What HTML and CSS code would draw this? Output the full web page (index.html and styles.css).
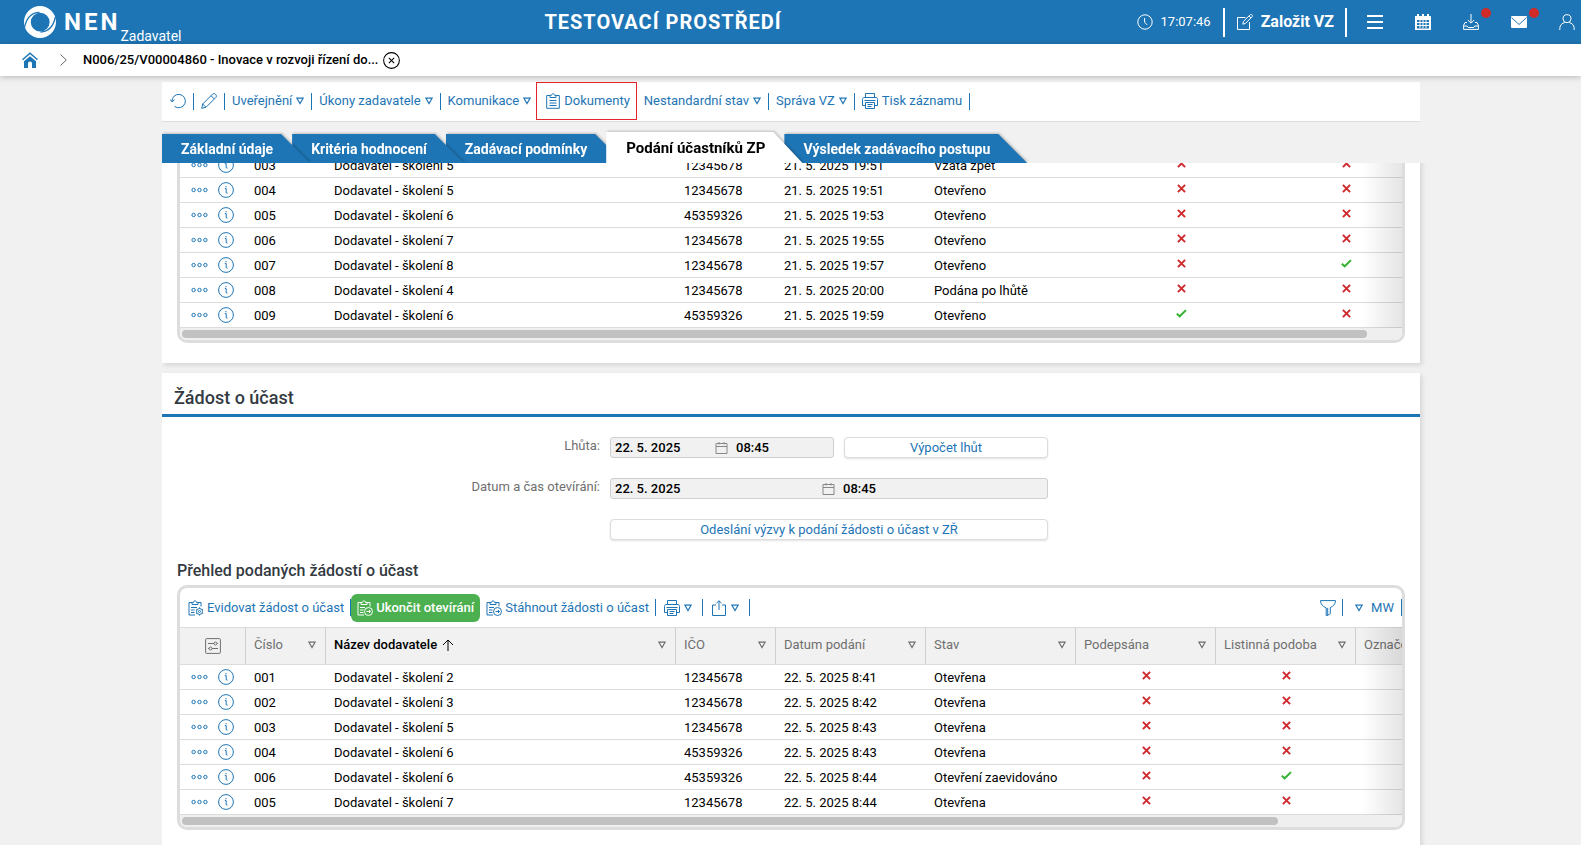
FILE: index.html
```html
<!DOCTYPE html>
<html lang="cs">
<head>
<meta charset="utf-8">
<title>NEN – Zadavatel</title>
<link rel="stylesheet" href="styles.css">
</head>
<body>
<svg class="sprite" aria-hidden="true">
  <symbol id="i-clock" viewBox="0 0 16 16"><circle cx="8" cy="8" r="7.2"/><path d="M7.6 4v4.3l2.6 2.6"/></symbol>
  <symbol id="i-edit" viewBox="0 0 16 16"><path d="M8.5 3.5h-8v12h12V8M5.8 10.2l.7-2.8 6.6-6.6c.6-.5 1.4-.4 1.9.1s.6 1.3 0 1.9L8.5 9.4zM12 2l2 2"/></symbol>
  <symbol id="i-refresh" viewBox="0 0 16 16"><path d="M2 8.600A6.700 6.700 0 1 1 4.500 13.300M0 6.300l2 2.500 2.600-2"/></symbol>
  <symbol id="i-pencil" viewBox="0 0 16 16"><path d="M.7 15.300l1-4.300L11.600 1.100c.8-.8 2-.6 2.700.1l.5.500c.7.700.8 1.900.1 2.700L5 14.300zM10 2.700l3.300 3.300M1.700 11l3.300 3.300"/></symbol>
  <symbol id="i-down" viewBox="0 0 8 8"><path d="M.9 1.200h6.200L4 6.600z"/></symbol>
  <symbol id="i-clip" viewBox="0 0 14 16"><path d="M4 2.500H.7v12.800h12.600V2.500H10M4 4.500V2.300h1.500C5.500.3 8.500.3 8.500 2.300H10v2.200zM3.500 7.500h7M3.500 10h7M3.500 12.500h7"/></symbol>
  <symbol id="i-print" viewBox="0 0 16 16"><path d="M3.500 4.500v-4h9v4M3.500 12.500h-3v-6c0-1 .5-2 1.500-2h12c1 0 1.500 1 1.500 2v6h-3M3.500 9.500h9v6h-9zM5.500 11.500h5M5.500 13.500h4M2.500 7.500h11"/></symbol>
  <symbol id="i-clipgear" viewBox="0 0 16 16"><path d="M4 2.500H1v12.500h6M10 2.500h3v4M4 4.500V2.400h1.500c0-2 3-2 3 0H10v2.100zM3 7.500h6M3 10h3.500M3 12.500h3.500"/><circle cx="11.500" cy="11.500" r="3"/><circle cx="11.500" cy="11.500" r="1"/><path d="M11.500 7.400v1.100M11.500 14.500v1.100M7.900 9.400l1 .6M14.100 13l1 .6M7.900 13.600l1-.6M14.100 10l1-.6"/></symbol>
  <symbol id="i-cliparrow" viewBox="0 0 16 16"><path d="M4 2.500H1v12.500h6M10 2.500h3v4M4 4.500V2.400h1.500c0-2 3-2 3 0H10v2.100zM3 7.500h5M3 10h3.500M3 12.500h3.500M9.500 11.500h4M11.900 9.900l1.600 1.600-1.600 1.600"/><circle cx="11.500" cy="11.500" r="4"/></symbol>
  <symbol id="i-share" viewBox="0 0 16 16"><path d="M5 5H1.500v10.500h13V5H11M8 10V.8M5.500 3.200L8 .8l2.500 2.400"/></symbol>
  <symbol id="i-funnel" viewBox="0 0 16 16"><path d="M.5.600h15c0 3.400-2 5.400-5.200 7v6l-2.600 1.800V7.800M.5.600c0 3.400 2 5.600 5.700 7.400v7.500h1.500"/></symbol>
  <symbol id="i-settings" viewBox="0 0 16 16"><rect x=".6" y=".6" width="14.800" height="14.800" rx="1"/><path d="M3 5.500h6M12 5.500h1M3 10.500h1M7 10.500h6"/><circle cx="10.500" cy="5.500" r="1.500"/><circle cx="5.500" cy="10.500" r="1.500"/></symbol>
  <symbol id="i-up" viewBox="0 0 12 12"><path d="M6 12V1M1 6l5-5 5 5"/></symbol>
  <symbol id="i-dots" viewBox="0 0 17 6"><circle cx="2.600" cy="3" r="1.700"/><circle cx="8.500" cy="3" r="1.700"/><circle cx="14.400" cy="3" r="1.700"/></symbol>
  <symbol id="i-info" viewBox="0 0 16 16"><circle cx="8" cy="8" r="7.400"/><path d="M6.800 6.600h1.400v4.200l1.300.3M8 4v1.300"/></symbol>
  <symbol id="i-cal" viewBox="0 0 12 12"><path d="M.5 1.500h11v10H.5zM.5 4.500h11M3.500 0v2.500M8.500 0v2.500"/></symbol>
  <symbol id="i-x" viewBox="0 0 9 9"><path d="M.9.900l7.200 7.200M8.100.9L.9 8.100"/></symbol>
  <symbol id="i-check" viewBox="0 0 11 9"><path d="M.8 4.800l2.900 2.500L10 1.100"/></symbol>
</svg>

<header class="topbar">
  <a class="brand" href="#">
    <svg class="logo" viewBox="0 0 32 32"><path fill="#fff" fill-rule="evenodd" d="M16 0a16 16 0 1 1 0 32 16 16 0 0 1 0-32zm.2 6.800a9.400 9.400 0 1 0 0 18.800 9.400 9.400 0 0 0 0-18.800z"/><path fill="none" stroke="#1e75b5" stroke-width="1.300" d="M.6 21C2.500 12 7.500 6.600 15.500 6.300M31.400 11C29.500 20 24.500 25.800 16.500 26.100"/></svg>
    <span class="brand-name">NEN</span><span class="brand-role">Zadavatel</span>
  </a>
  <h1 class="env">TESTOVACÍ PROSTŘEDÍ</h1>
  <div class="tools">
    <span class="clock"><svg class="ic16"><use href="#i-clock"/></svg>17:07:46</span>
    <button class="create"><svg class="ic16"><use href="#i-edit"/></svg>Založit VZ</button>
    <nav class="quick">
      <button aria-label="Menu"><svg class="ic16" viewBox="0 0 16 16"><path stroke-width="2" d="M0 2h16M0 8h16M0 14h16"/></svg></button>
      <button aria-label="Kalendář"><svg class="ic16" viewBox="0 0 16 16"><path fill="#fff" stroke="none" fill-rule="evenodd" d="M0 2h2V0h2v2h3V0h2v2h3V0h2v2h2v14H0zM2 6v8.500h12V6z"/><path d="M2 8.500h12M2 11.500h12M5 6v8M8 6v8M11 6v8"/></svg></button>
      <button class="dot" aria-label="Stažené soubory"><svg class="ic16" viewBox="0 0 16 16"><path d="M8 0v9M4.800 6L8 9.200 11.200 6M4 8.500H2L.6 11.200v4.200h14.800v-4.200L14 8.500h-2M.6 12h3.600l1 1.500h5.600l1-1.500h3.600"/></svg></button>
      <button class="dot" aria-label="Zprávy"><svg class="ic16" viewBox="0 0 16 16"><rect x="0" y="2" width="16" height="12" rx="1" fill="#fff" stroke="none"/><path stroke="#1e75b5" d="M.5 3.500L8 10.500l7.500-7"/></svg></button>
      <button aria-label="Uživatel"><svg class="ic16" viewBox="0 0 16 16"><circle cx="8" cy="4.700" r="4"/><path d="M.8 16v-1.500c0-3.500 2.500-5.500 5-6M15.200 16v-1.500c0-3.500-2.500-5.500-5-6"/></svg></button>
    </nav>
  </div>
</header>

<nav class="crumbs">
  <a href="#" aria-label="Domů"><svg class="home" viewBox="0 0 16 16"><path fill="#1e75b5" d="M8 4.300l6 5V16h-4v-4.500a2 2 0 0 0-4 0V16H2V9.300z"/><path fill="none" stroke="#1e75b5" stroke-width="1.500" d="M.5 7.800L8 1.200l7.500 6.600"/></svg></a>
  <svg class="chev" viewBox="0 0 7 12"><path d="M.5.500L6.300 6 .5 11.500"/></svg>
  <a class="crumb" href="#">N006/25/V00004860 - Inovace v rozvoji řízení do...</a>
  <button class="close" aria-label="Zavřít"><svg viewBox="0 0 16 16"><circle cx="8" cy="8" r="7.400"/><path d="M5.500 5.500l5 5M10.500 5.500l-5 5"/></svg></button>
</nav>

<main class="page">
  <div class="actions">
    <button aria-label="Obnovit"><svg class="ic16"><use href="#i-refresh"/></svg></button>
    <button aria-label="Upravit"><svg class="ic16"><use href="#i-pencil"/></svg></button>
    <button>Uveřejnění<svg class="tri"><use href="#i-down"/></svg></button>
    <button>Úkony zadavatele<svg class="tri"><use href="#i-down"/></svg></button>
    <button class="open">Komunikace<svg class="tri"><use href="#i-down"/></svg></button>
    <button class="marked"><svg class="ic14"><use href="#i-clip"/></svg>Dokumenty</button>
    <button>Nestandardní stav<svg class="tri"><use href="#i-down"/></svg></button>
    <button>Správa VZ<svg class="tri"><use href="#i-down"/></svg></button>
    <button><svg class="ic16"><use href="#i-print"/></svg>Tisk záznamu</button>
  </div>

  <div class="tabs" role="tablist">
    <div class="tab t1"><button role="tab">Základní údaje</button></div>
    <div class="tab t2"><button role="tab">Kritéria hodnocení</button></div>
    <div class="tab t3"><button role="tab">Zadávací podmínky</button></div>
    <div class="tab active"><button role="tab" aria-selected="true">Podání účastníků ZP</button></div>
    <div class="tab t5"><button role="tab">Výsledek zadávacího postupu</button></div>
  </div>

  <div class="content">
    <section class="panel scrolled">
      <div class="frame">
        <div class="grid">
          <table class="rows">
            <colgroup><col class="w66"><col class="w80"><col class="w350"><col class="w100"><col class="w150"><col class="w173"><col class="w165"><col class="w165"></colgroup>
            <tbody>
              <tr><td class="act"><svg class="dots"><use href="#i-dots"/></svg><svg class="info"><use href="#i-info"/></svg></td><td>003</td><td>Dodavatel - školení 5</td><td>12345678</td><td>21. 5. 2025 19:51</td><td>Vzata zpět</td><td class="flag"><svg class="no"><use href="#i-x"/></svg></td><td class="flag"><svg class="no"><use href="#i-x"/></svg></td></tr>
              <tr><td class="act"><svg class="dots"><use href="#i-dots"/></svg><svg class="info"><use href="#i-info"/></svg></td><td>004</td><td>Dodavatel - školení 5</td><td>12345678</td><td>21. 5. 2025 19:51</td><td>Otevřeno</td><td class="flag"><svg class="no"><use href="#i-x"/></svg></td><td class="flag"><svg class="no"><use href="#i-x"/></svg></td></tr>
              <tr><td class="act"><svg class="dots"><use href="#i-dots"/></svg><svg class="info"><use href="#i-info"/></svg></td><td>005</td><td>Dodavatel - školení 6</td><td>45359326</td><td>21. 5. 2025 19:53</td><td>Otevřeno</td><td class="flag"><svg class="no"><use href="#i-x"/></svg></td><td class="flag"><svg class="no"><use href="#i-x"/></svg></td></tr>
              <tr><td class="act"><svg class="dots"><use href="#i-dots"/></svg><svg class="info"><use href="#i-info"/></svg></td><td>006</td><td>Dodavatel - školení 7</td><td>12345678</td><td>21. 5. 2025 19:55</td><td>Otevřeno</td><td class="flag"><svg class="no"><use href="#i-x"/></svg></td><td class="flag"><svg class="no"><use href="#i-x"/></svg></td></tr>
              <tr><td class="act"><svg class="dots"><use href="#i-dots"/></svg><svg class="info"><use href="#i-info"/></svg></td><td>007</td><td>Dodavatel - školení 8</td><td>12345678</td><td>21. 5. 2025 19:57</td><td>Otevřeno</td><td class="flag"><svg class="no"><use href="#i-x"/></svg></td><td class="flag"><svg class="yes"><use href="#i-check"/></svg></td></tr>
              <tr><td class="act"><svg class="dots"><use href="#i-dots"/></svg><svg class="info"><use href="#i-info"/></svg></td><td>008</td><td>Dodavatel - školení 4</td><td>12345678</td><td>21. 5. 2025 20:00</td><td>Podána po lhůtě</td><td class="flag"><svg class="no"><use href="#i-x"/></svg></td><td class="flag"><svg class="no"><use href="#i-x"/></svg></td></tr>
              <tr><td class="act"><svg class="dots"><use href="#i-dots"/></svg><svg class="info"><use href="#i-info"/></svg></td><td>009</td><td>Dodavatel - školení 6</td><td>45359326</td><td>21. 5. 2025 19:59</td><td>Otevřeno</td><td class="flag"><svg class="yes"><use href="#i-check"/></svg></td><td class="flag"><svg class="no"><use href="#i-x"/></svg></td></tr>
            </tbody>
          </table>
        </div>
        <div class="hbar"><div class="thumb" style="width:97.3%"></div></div>
      </div>
    </section>

    <section class="panel">
      <h2>Žádost o účast</h2>
      <form class="form">
        <label for="d1">Lhůta:</label>
        <div class="field"><input id="d1" value="22. 5. 2025" readonly><svg class="cal"><use href="#i-cal"/></svg><input class="time" value="08:45" aria-label="Lhůta – čas" readonly></div>
        <button type="button" class="btn">Výpočet lhůt</button>
        <label for="d2">Datum a čas otevírání:</label>
        <div class="field wide"><input id="d2" value="22. 5. 2025" readonly><svg class="cal"><use href="#i-cal"/></svg><input class="time" value="08:45" aria-label="Otevírání – čas" readonly></div>
        <button type="button" class="btn wide">Odeslání výzvy k podání žádosti o účast v ZŘ</button>
      </form>
      <h3>Přehled podaných žádostí o účast</h3>
      <div class="frame">
        <div class="bar">
          <button><svg class="ic16"><use href="#i-clipgear"/></svg>Evidovat žádost o účast</button>
          <button class="green"><svg class="ic16"><use href="#i-cliparrow"/></svg>Ukončit otevírání</button>
          <button><svg class="ic16"><use href="#i-cliparrow"/></svg>Stáhnout žádosti o účast</button>
          <button class="menu" aria-label="Tisk"><svg class="ic16"><use href="#i-print"/></svg><svg class="tri"><use href="#i-down"/></svg></button>
          <button class="menu" aria-label="Export"><svg class="ic16"><use href="#i-share"/></svg><svg class="tri"><use href="#i-down"/></svg></button>
          <span class="space"></span>
          <button aria-label="Filtr"><svg class="ic16"><use href="#i-funnel"/></svg></button>
          <button class="view"><svg class="tri"><use href="#i-down"/></svg>MW</button>
        </div>
        <div class="grid">
          <table class="rows">
            <colgroup><col class="w66"><col class="w80"><col class="w350"><col class="w100"><col class="w150"><col class="w150"><col class="w140"><col class="w140"><col class="w140"></colgroup>
            <thead>
              <tr><th class="set"><svg class="ic16"><use href="#i-settings"/></svg></th>
                <th><div>Číslo<svg class="tri"><use href="#i-down"/></svg></div></th>
                <th><div><b>Název dodavatele</b><svg class="up"><use href="#i-up"/></svg><svg class="tri"><use href="#i-down"/></svg></div></th>
                <th><div>IČO<svg class="tri"><use href="#i-down"/></svg></div></th>
                <th><div>Datum podání<svg class="tri"><use href="#i-down"/></svg></div></th>
                <th><div>Stav<svg class="tri"><use href="#i-down"/></svg></div></th>
                <th><div>Podepsána<svg class="tri"><use href="#i-down"/></svg></div></th>
                <th><div>Listinná podoba<svg class="tri"><use href="#i-down"/></svg></div></th>
                <th><div>Označení<svg class="tri"><use href="#i-down"/></svg></div></th></tr>
            </thead>
            <tbody>
              <tr><td class="act"><svg class="dots"><use href="#i-dots"/></svg><svg class="info"><use href="#i-info"/></svg></td><td>001</td><td>Dodavatel - školení 2</td><td>12345678</td><td>22. 5. 2025 8:41</td><td>Otevřena</td><td class="flag"><svg class="no"><use href="#i-x"/></svg></td><td class="flag"><svg class="no"><use href="#i-x"/></svg></td><td></td></tr>
              <tr><td class="act"><svg class="dots"><use href="#i-dots"/></svg><svg class="info"><use href="#i-info"/></svg></td><td>002</td><td>Dodavatel - školení 3</td><td>12345678</td><td>22. 5. 2025 8:42</td><td>Otevřena</td><td class="flag"><svg class="no"><use href="#i-x"/></svg></td><td class="flag"><svg class="no"><use href="#i-x"/></svg></td><td></td></tr>
              <tr><td class="act"><svg class="dots"><use href="#i-dots"/></svg><svg class="info"><use href="#i-info"/></svg></td><td>003</td><td>Dodavatel - školení 5</td><td>12345678</td><td>22. 5. 2025 8:43</td><td>Otevřena</td><td class="flag"><svg class="no"><use href="#i-x"/></svg></td><td class="flag"><svg class="no"><use href="#i-x"/></svg></td><td></td></tr>
              <tr><td class="act"><svg class="dots"><use href="#i-dots"/></svg><svg class="info"><use href="#i-info"/></svg></td><td>004</td><td>Dodavatel - školení 6</td><td>45359326</td><td>22. 5. 2025 8:43</td><td>Otevřena</td><td class="flag"><svg class="no"><use href="#i-x"/></svg></td><td class="flag"><svg class="no"><use href="#i-x"/></svg></td><td></td></tr>
              <tr><td class="act"><svg class="dots"><use href="#i-dots"/></svg><svg class="info"><use href="#i-info"/></svg></td><td>006</td><td>Dodavatel - školení 6</td><td>45359326</td><td>22. 5. 2025 8:44</td><td>Otevření zaevidováno</td><td class="flag"><svg class="no"><use href="#i-x"/></svg></td><td class="flag"><svg class="yes"><use href="#i-check"/></svg></td><td></td></tr>
              <tr><td class="act"><svg class="dots"><use href="#i-dots"/></svg><svg class="info"><use href="#i-info"/></svg></td><td>005</td><td>Dodavatel - školení 7</td><td>12345678</td><td>22. 5. 2025 8:44</td><td>Otevřena</td><td class="flag"><svg class="no"><use href="#i-x"/></svg></td><td class="flag"><svg class="no"><use href="#i-x"/></svg></td><td></td></tr>
            </tbody>
          </table>
        </div>
        <div class="hbar"><div class="thumb" style="width:90%"></div></div>
      </div>
    </section>
  </div>
</main>
</body>
</html>
```

FILE: styles.css
```css
* { box-sizing: border-box; }
html, body { height: 100%; margin: 0; }
body {
  display: flex;
  flex-direction: column;
  overflow: hidden;
  background: #f1f1f1;
  color: #000;
  font: 13px/16px Roboto, sans-serif;
}
button { display: flex; align-items: center; margin: 0; padding: 0; border: 0; background: none; color: inherit; font: inherit; white-space: nowrap; cursor: pointer; }
a { color: inherit; text-decoration: none; }
svg { flex: none; fill: none; stroke: currentColor; stroke-width: 1; }
.sprite { position: absolute; width: 0; height: 0; }
.ic16 { width: 16px; height: 16px; }
.ic14 { width: 14px; height: 16px; }
.tri { width: 8px; height: 8px; stroke-width: 1.2; }

/* top bar */
.topbar { display: flex; align-items: center; justify-content: space-between; flex: none; height: 44px; background: #1e75b5; color: #fff; }
.brand { display: flex; align-items: center; height: 44px; padding-left: 24px; }
.logo { width: 32px; height: 32px; stroke: none; }
.brand-name { margin-left: 8px; font-size: 24px; line-height: 28px; font-weight: bold; letter-spacing: 3px; }
.brand-role { align-self: flex-end; font-size: 14px; }
.env { margin: 0; padding-left: 8px; font-size: 20px; line-height: 24px; font-weight: bold; letter-spacing: 1px; }
.tools { display: flex; align-items: center; justify-content: flex-end; padding-right: 6px; }
.clock { display: flex; align-items: center; gap: 8px; padding-right: 12px; }
.create { gap: 8px; height: 29px; padding: 0 11px 0 12px; border: solid #fff; border-width: 0 2px; font-size: 16px; font-weight: bold; }
.quick { display: flex; gap: 32px; padding-left: 20px; }
.dot { position: relative; }
.dot::after { content: ""; position: absolute; top: -6px; left: 18px; width: 10px; height: 10px; border-radius: 50%; background: #d02a2a; }

.crumbs { position: relative; display: flex; align-items: center; flex: none; height: 32px; padding-left: 22px; background: #fff; box-shadow: 0 1px 6px rgba(0, 0, 0, .25); }
.home { display: block; width: 16px; height: 16px; stroke: none; }
.chev { width: 7px; height: 12px; margin: 0 16px 0 22px; stroke: #666; }
.crumb { font-weight: 500; }
.close { margin-left: 5px; }
.close svg { width: 17px; height: 17px; }

/* page column */
.page { display: flex; flex-direction: column; flex: 1; min-height: 0; padding: 6px 161px 0 162px; }
.actions { display: flex; align-items: center; flex: none; height: 40px; padding: 0 0 1px 1px; border-bottom: 1px solid #ddd; background: #fff; color: #1e75b5; }
.actions button { gap: 4px; height: 17px; padding: 0 7px; border-right: 1px solid #1e75b5; }
.actions .open { padding-right: 5px; border-right: 0; }
.actions .marked { height: 38px; padding: 0 6px 0 9px; border: 1px solid #e5252c; }

.tabs { display: flex; align-items: flex-end; flex: none; height: 41px; }
.tab { position: relative; margin-left: -18px; filter: drop-shadow(1px -1px 1px rgba(0, 0, 0, .2)); }
.tab button { height: 29px; padding: 1px 37px 0 19px; background: #1e75b5; color: #fff; font-size: 14px; font-weight: bold; clip-path: polygon(0 0, calc(100% - 29px) 0, 100% 100%, 0 100%); }
.t1 { z-index: 4; margin-left: 0; }
.t2 { z-index: 3; }
.t3 { z-index: 2; }
.active { z-index: 5; }
.t5 { z-index: 1; }
.tab.active button { height: 31px; padding: 0 37px 0 20px; background: #fff; color: #000; font-size: 15px; font-weight: bold; }

.content { display: flex; flex-direction: column; gap: 10px; flex: 1; min-height: 0; margin-right: -8px; padding-right: 8px; overflow: hidden; position: relative; z-index: 6; }
.panel { flex: none; padding-bottom: 20px; background: #fff; box-shadow: 2px 2px 5px rgba(0, 0, 0, .12); }
.scrolled { margin-top: -13px; }
h2 { margin: 0; padding: 15px 12px 6px; border-bottom: 3px solid #1e75b5; color: #333a42; font-size: 18px; line-height: 20px; font-weight: 500; }
h3 { margin: 0; padding: 21px 15px 4px; color: #333a42; font-size: 16px; line-height: 20px; font-weight: 500; }

/* form */
.form { display: grid; grid-template-columns: 438fr 224px 204px 362fr; column-gap: 10px; row-gap: 20px; padding-top: 20px; }
.form label { grid-column: 1; color: #6f6f6f; text-align: right; line-height: 18px; }
.field { display: flex; align-items: center; grid-column: 2; height: 21px; padding: 0 4px; border: 1px solid #cfcfcf; border-radius: 3px; background: #f1f1f1; }
.field.wide, .btn.wide { grid-column: 2 / span 2; }
.field input { flex: 1 1 0; width: 0; height: 17px; padding: 0; border: 0; background: none; font: 500 13px/17px Roboto, sans-serif; }
.field .time { margin-left: 8px; }
.cal { width: 13px; height: 12px; margin-left: 7px; stroke: #888; }
.btn { justify-content: center; height: 21px; border: 1px solid #dcdcdc; border-radius: 4px; background: #fff; box-shadow: 0 1px 2px rgba(0, 0, 0, .12); color: #1e75b5; }

/* data grids */
.frame { margin: 0 15px; border: 3px solid #dcdddf; border-radius: 10px; overflow: hidden; }
.bar { display: flex; align-items: center; height: 39px; padding-left: 2px; color: #1e75b5; }
.bar button { gap: 3px; height: 17px; padding: 0 6px; border-right: 1px solid #1e75b5; }
.bar .green { height: 28px; padding: 0 6px; border: 0; border-radius: 6px; background: #4caf50; color: #fff; font-weight: 500; }
.bar .menu { gap: 4px; padding: 0 10px 0 8px; }
.bar .view { gap: 8px; padding: 0 7px 0 12px; }
.space { flex: 1; }
.grid { position: relative; overflow: hidden; }
.grid::after { content: ""; position: absolute; inset: 0 0 0 auto; width: 40px; background: linear-gradient(to right, transparent, rgba(0, 0, 0, .1)); }
.rows { width: 0; border-collapse: separate; border-spacing: 0; table-layout: fixed; }
.w66 { width: 66px; } .w80 { width: 80px; } .w100 { width: 100px; } .w140 { width: 140px; } .w150 { width: 150px; }
.w165 { width: 165px; } .w173 { width: 173px; } .w350 { width: 350px; }
th, td { padding: 2px 0 0 8px; border-bottom: 1px solid #dcdcdc; text-align: left; font-weight: normal; white-space: nowrap; }
td { height: 25px; }
th { height: 38px; padding: 0 9px 3px 8px; border-top: 1px solid #dcdcdc; border-right: 1px solid #d0d0d0; background: #f1f1f1; color: #6f6f6f; }
th div { display: flex; align-items: center; }
th .tri { margin-left: auto; }
th b { color: #000; font-weight: 500; }
.up { width: 12px; height: 12px; margin-left: 5px; stroke: #000; }
.set { padding: 0; text-align: center; }
.set svg, .act svg, .flag svg { vertical-align: middle; }
.act { padding: 0 0 0 11px; color: #1e75b5; }
.dots { width: 17px; height: 6px; margin-right: 10px; }
.info { width: 16px; height: 16px; }
.flag { padding: 0 0 4px; text-align: center; }
.no { width: 9px; height: 9px; stroke: #cf2a2e; stroke-width: 2; }
.yes { width: 11px; height: 9px; stroke: #35b233; stroke-width: 2; }
.hbar { height: 12px; padding: 2px; background: #efefef; }
.thumb { height: 8px; border-radius: 4px; background: #c1c1c1; }
```
